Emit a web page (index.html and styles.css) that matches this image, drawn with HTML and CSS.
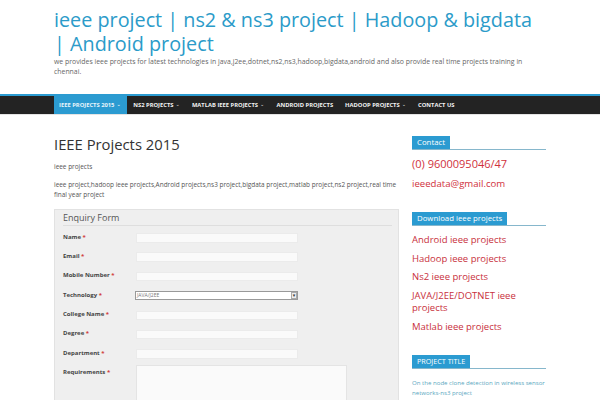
FILE: index.html
```html
<!DOCTYPE html>
<html>
<head>
<meta charset="utf-8">
<link rel="stylesheet" href="styles.css">
</head>
<body>
<header class="site-header">
  <div class="wrap">
    <h1 class="site-title"><span class="nw">ieee project | ns2 &amp; ns3 project | Hadoop &amp; bigdata</span><br>| Android project</h1>
    <p class="site-desc">we provides ieee projects for latest technologies in java,j2ee,dotnet,ns2,ns3,hadoop,bigdata,android and also provide real time projects training in chennai.</p>
  </div>
</header>
<nav class="nav">
  <div class="wrap nav-inner">
    <a class="nav-item active">IEEE PROJECTS 2015 <span class="caret">&#8964;</span></a>
    <a class="nav-item">NS2 PROJECTS <span class="caret">&#8964;</span></a>
    <a class="nav-item">MATLAB IEEE PROJECTS <span class="caret">&#8964;</span></a>
    <a class="nav-item">ANDROID PROJECTS</a>
    <a class="nav-item">HADOOP PROJECTS <span class="caret">&#8964;</span></a>
    <a class="nav-item">CONTACT US</a>
  </div>
</nav>
<div class="wrap content">
  <main class="main">
    <h2 class="page-title">IEEE Projects 2015</h2>
    <p class="small first">ieee projects</p>
    <p class="small"><span class="nw">ieee project,hadoop ieee projects,Android projects,ns3 project,bigdata project,matlab project,ns2 project,real time</span><br>final year project</p>
    <div class="form-box">
      <div class="form-title">Enquiry Form</div>
      <div class="form-grid">
        <label>Name <span class="req">*</span></label><div class="input"></div>
        <label>Email <span class="req">*</span></label><div class="input"></div>
        <label>Mobile Number <span class="req">*</span></label><div class="input"></div>
        <label>Technology <span class="req">*</span></label><div class="select"><span>JAVA/J2EE</span><span class="sel-btn">&#9662;</span></div>
        <label>College Name <span class="req">*</span></label><div class="input"></div>
        <label>Degree <span class="req">*</span></label><div class="input"></div>
        <label>Department <span class="req">*</span></label><div class="input"></div>
        <label>Requirements <span class="req">*</span></label><div class="textarea"></div>
      </div>
    </div>
  </main>
  <aside class="side">
    <div class="widget">
      <div class="w-head"><span>Contact</span></div>
      <p class="phone">(0) 9600095046/47</p>
      <p class="mail">ieeedata@gmail.com</p>
    </div>
    <div class="widget">
      <div class="w-head"><span>Download ieee projects</span></div>
      <ul class="links">
        <li>Android ieee projects</li>
        <li>Hadoop ieee projects</li>
        <li>Ns2 ieee projects</li>
        <li>JAVA/J2EE/DOTNET ieee projects</li>
        <li>Matlab ieee projects</li>
      </ul>
    </div>
    <div class="widget">
      <div class="w-head caps"><span>PROJECT TITLE</span></div>
      <p class="proj">On the node clone detection in wireless sensor networks-ns3 project</p>
    </div>
  </aside>
</div>
</body>
</html>
```
FILE: styles.css
```css
* { box-sizing: border-box; }
html, body { margin: 0; padding: 0; background: #fff; }
body { font-family: "Open Sans", "DejaVu Sans", sans-serif; color: #444; }
.wrap { width: 492px; margin: 0 auto; }
.nw { white-space: nowrap; }
.site-header { padding: 8px 0 17px; }
.site-title { margin: 0; font-weight: 400; font-size: 19.8px; line-height: 24px; color: #2b9bc9; }
.site-desc { margin: 1px 0 0; font-size: 6.9px; line-height: 10px; color: #666; }
.nav { background: #232323; border-top: 2px solid #2b9bd1; border-bottom: 1px solid #e4e4e4; }
.nav-inner { display: flex; height: 18px; align-items: stretch; }
.nav-item { display: flex; align-items: center; padding: 0 6px; font-size: 5.8px; font-weight: 700; color: #f2f2f2; white-space: pre; }
.nav-item.active { background: #2b9bd1; padding: 0 6.5px 0 5px; color: #e8f4fa; }
.caret { font-size: 5.2px; margin-left: 0.5px; position: relative; top: -1px; color: #bbb; }
.active .caret { color: #e0f0f8; }
.content { display: flex; gap: 13px; padding-top: 19px; }
.main { width: 345px; }
.side { width: 134px; padding-top: 2px; }
.page-title { margin: 0; font-size: 14.8px; line-height: 20px; font-weight: 400; color: #333; }
.small { margin: 8px 0 0; font-size: 6.45px; line-height: 10px; color: #555; }
.small.first { margin-top: 8px; }
.form-box { margin-top: 9px; background: #efefef; border: 1px solid #e2e2e2; padding: 2px 6px 0 8px; }
.form-title { font-size: 9px; line-height: 12px; color: #555; padding-bottom: 1px; border-bottom: 1px solid #dedede; }
.form-grid { display: grid; grid-template-columns: 73px 162px; grid-template-rows: repeat(7, 10px) auto; row-gap: 9.4px; padding-top: 5.5px; }
.form-grid label { font-size: 6px; font-weight: 700; color: #444; line-height: 10px; }
.req { color: #d13b3b; }
.input { height: 9.5px; margin-top: 1.5px; background: #fafafa; border: 1px solid #ebebeb; }
.select { height: 9px; margin-top: 1px; background: #fff; border: 1px solid #999; display: flex; justify-content: space-between; align-items: center; font-size: 5px; color: #777; padding-left: 1px; margin-left: -1px; }
.sel-btn { font-size: 5px; width: 6px; height: 7px; border: 1px solid #aaa; display: flex; align-items: center; justify-content: center; background: #eee; color: #333; }
.textarea { width: 211px; height: 40px; margin-top: -2px; background: #fafafa; border: 1px solid #e4e4e4; }
.widget { margin-bottom: 21px; }
.w-head { display: flex; border-bottom: 1px solid #86b7cc; }
.w-head span { background: #2b9bd1; color: #fff; font-size: 7.8px; line-height: 13px; padding: 0 5px; }
.w-head.caps span { font-size: 7.2px; line-height: 13.5px; }
.phone { margin: 6px 0 0; color: #d0303c; font-size: 11px; line-height: 15px; }
.mail { margin: 6px 0 0; color: #d0303c; font-size: 9.6px; line-height: 14px; }
.links { list-style: none; margin: 8px 0 0; padding: 0; }
.links li { color: #c8303c; font-size: 9.5px; line-height: 12px; margin-bottom: 6.7px; }
.links li:last-child { margin-bottom: 0; }
.widget:nth-child(2) { margin-bottom: 22px; }
.proj { margin: 9px 0 0; color: #5aa7c0; font-size: 6.1px; line-height: 9.4px; }
```
